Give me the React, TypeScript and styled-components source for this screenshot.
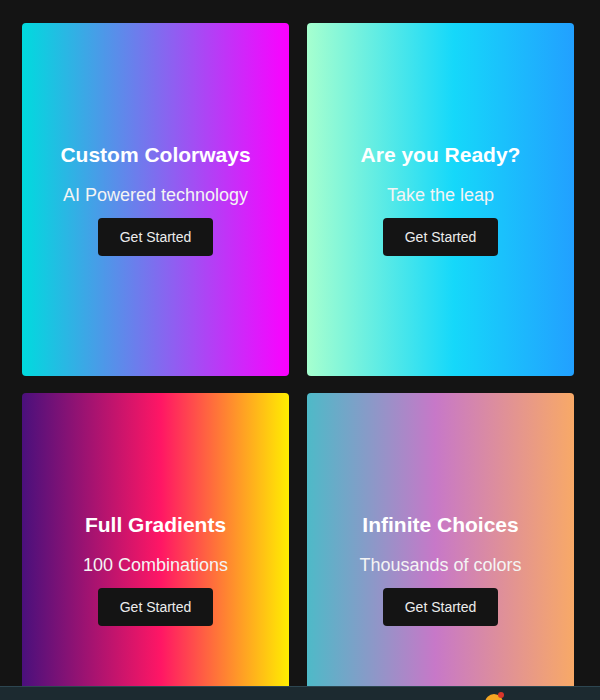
import React from "react";
import styled, { createGlobalStyle } from "styled-components";

const Global = createGlobalStyle`
  html, body { margin: 0; padding: 0; background: #141414; }
  body { font-family: "Liberation Sans", Arial, sans-serif; overflow: hidden; }
`;

const Page = styled.div`
  height: 700px;
  overflow: hidden;
  background: #141414;
  padding: 23px 26px 0 22px;
  box-sizing: border-box;
`;

const Grid = styled.div`
  display: grid;
  grid-template-columns: 267px 267px;
  grid-auto-rows: 353px;
  column-gap: 18px;
  row-gap: 17px;
`;

const Card = styled.div<{ $bg: string }>`
  border-radius: 4px;
  background: ${(p) => p.$bg};
  display: flex;
  flex-direction: column;
  align-items: center;
  justify-content: center;
  color: #fff;
  text-align: center;
`;

const Title = styled.h2`
  margin: 0;
  font-size: 21px;
  line-height: 24px;
  font-weight: 700;
  color: #fff;
`;

const Subtitle = styled.p`
  margin: 18px 0 0;
  font-size: 18px;
  line-height: 21px;
  color: #f4f4f4;
`;

const Button = styled.button`
  margin-top: 12px;
  height: 38px;
  padding: 0 22px;
  border: none;
  border-radius: 4px;
  background: #141414;
  color: #ececec;
  font-family: "Liberation Sans", Arial, sans-serif;
  font-size: 14px;
  cursor: pointer;
`;

const BottomBar = styled.div`
  position: fixed;
  left: 0;
  right: 0;
  bottom: 0;
  height: 13px;
  overflow: hidden;
  background: #1c2a30;
  border-top: 1px solid #2d4651;
`;

const Badge = styled.div`
  position: absolute;
  left: 485px;
  top: 7px;
  width: 18px;
  height: 18px;
  border-radius: 50%;
  background: #f5a623;
`;

const Dot = styled.div`
  position: absolute;
  left: 498px;
  top: 5px;
  width: 6px;
  height: 6px;
  border-radius: 50%;
  background: #d9362b;
`;

const cards = [
  {
    title: "Custom Colorways",
    sub: "AI Powered technology",
    bg: "linear-gradient(90deg, #00dbde 0%, #fc00ff 100%)",
  },
  {
    title: "Are you Ready?",
    sub: "Take the leap",
    bg: "linear-gradient(90deg, #a6ffcf 0%, #15d8fa 55%, #22a0ff 100%)",
  },
  {
    title: "Full Gradients",
    sub: "100 Combinations",
    bg: "linear-gradient(90deg, #4a107c 0%, #ff1665 52%, #ffee00 100%)",
  },
  {
    title: "Infinite Choices",
    sub: "Thousands of colors",
    bg: "linear-gradient(90deg, #4ebac8 0%, #c778c8 48%, #f8a967 100%)",
  },
];

export default function App() {
  return (
    <>
      <Global />
      <Page>
        <Grid>
          {cards.map((c) => (
            <Card key={c.title} $bg={c.bg}>
              <Title>{c.title}</Title>
              <Subtitle>{c.sub}</Subtitle>
              <Button>Get Started</Button>
            </Card>
          ))}
        </Grid>
      </Page>
      <BottomBar>
        <Badge />
        <Dot />
      </BottomBar>
    </>
  );
}
